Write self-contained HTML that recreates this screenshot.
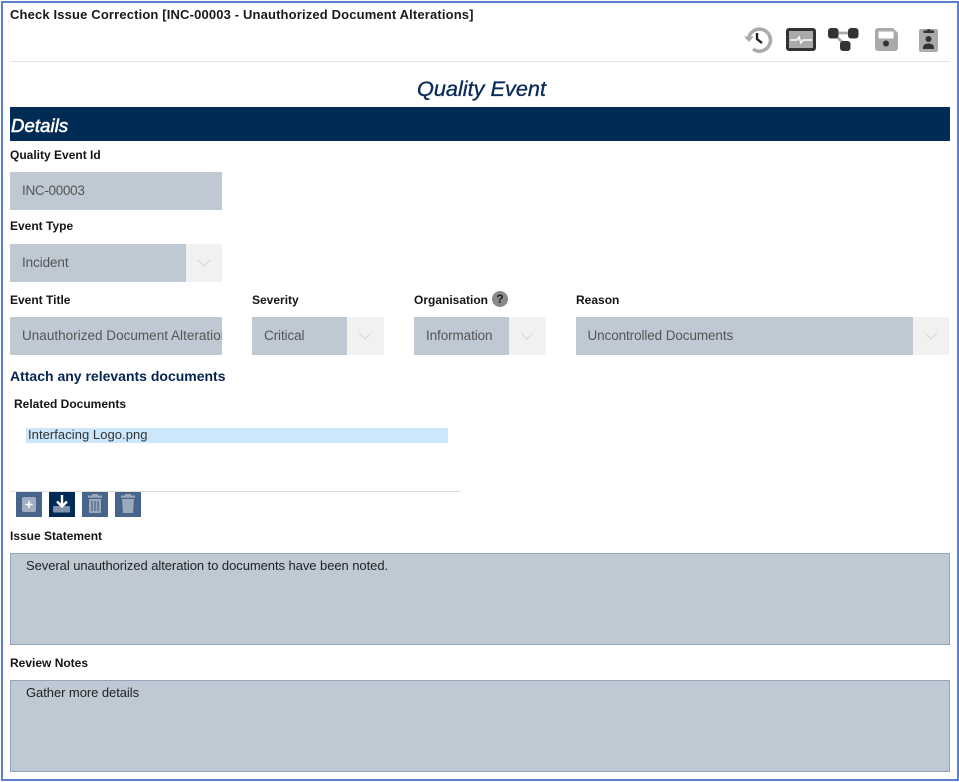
<!DOCTYPE html>
<html><head><meta charset="utf-8"><style>
html,body{margin:0;padding:0;background:#fff}
body{width:959px;height:782px;position:relative;overflow:hidden;font-family:"Liberation Sans",sans-serif;color:#111}
.a{position:absolute;white-space:nowrap}
.frame{position:absolute;left:1px;top:1px;width:954px;height:776px;border:2px solid #5b80cf}
.l{position:absolute;white-space:nowrap;font-weight:bold;font-size:12px;line-height:16px;color:#151515}
.f{position:absolute;background:#bec9d4;font-size:13.5px;color:#555;line-height:38px;padding-left:12px;box-sizing:border-box;white-space:nowrap;overflow:hidden;height:38px;letter-spacing:-.1px}
.d{position:absolute;background:#f1f1f1;height:38px;width:36px}
.d svg{position:absolute;left:11px;top:15px}
.t{position:absolute;left:10px;width:940px;background:#bec9d4;border:1px solid #93a5b8;box-sizing:border-box;font-size:13px;line-height:16px;color:#222;padding:3px 15px;letter-spacing:-.06px}
.b{position:absolute;top:492px;width:26px;height:25px;background:#47648a}
</style></head><body>
<div class="frame"></div>
<div class="a" style="left:10px;top:7px;font-size:13px;font-weight:bold;line-height:16px;color:#1a1a1a;letter-spacing:.15px">Check Issue Correction [INC-00003 - Unauthorized Document Alterations]</div>

<svg class="a" style="left:743px;top:26px" width="30" height="28" viewBox="0 0 30 28"><path d="M5.500 13.500A11 11 0 1 1 10 23" fill="none" stroke="#aaa" stroke-width="3.500"/><path d="M1 10.500l5 5.500 5-5.500z" fill="#aaa"/><path d="M14 7v6l5 4" fill="none" stroke="#222" stroke-width="2.400"/></svg>
<svg class="a" style="left:786px;top:28px" width="30" height="23" viewBox="0 0 30 23"><rect x="1.500" y="1.500" width="27" height="20" rx="1.500" fill="#aaa" stroke="#333" stroke-width="3"/><path d="M4 12h7l2-3 2 6 2-3h9" fill="none" stroke="#fff" stroke-width="1.500"/></svg>
<svg class="a" style="left:828px;top:28px" width="31" height="23" viewBox="0 0 31 23"><path d="M5 5h20M5 5l12 12" stroke="#aaa" stroke-width="2.800" fill="none"/><rect x="0" y="0" width="10.500" height="10.500" rx="3" fill="#333"/><rect x="20" y="0" width="10.500" height="10.500" rx="3" fill="#333"/><rect x="12" y="13" width="10.500" height="10" rx="3" fill="#333"/></svg>
<svg class="a" style="left:875px;top:28px" width="23" height="23" viewBox="0 0 23 23"><path d="M3 0h15l5 5v15a3 3 0 0 1-3 3H3a3 3 0 0 1-3-3V3a3 3 0 0 1 3-3z" fill="#aaa"/><rect x="3.500" y="3.500" width="15" height="7" fill="#fff"/><circle cx="11" cy="15.500" r="3" fill="#333"/></svg>
<svg class="a" style="left:919px;top:26px" width="20" height="27" viewBox="0 0 20 27"><rect x="0" y="3" width="19" height="23" rx="2" fill="#aaa"/><path d="M4.500 7V4.500h3a2.500 2.500 0 0 1 4.500 0h3V7z" fill="#333"/><circle cx="9.500" cy="13" r="3" fill="#333"/><path d="M4 23v-1.500c0-3 3-4 5.500-4s5.500 1 5.500 4V23z" fill="#333"/></svg>

<div class="a" style="left:10px;top:61px;width:940px;height:1px;background:#e3e3e3"></div>
<div class="a" style="left:417px;top:75px;font-size:21.700px;line-height:27px;font-style:italic;color:#0a2a58;-webkit-text-stroke:.35px #0a2a58">Quality Event</div>
<div class="a" style="left:10px;top:107px;width:940px;height:34px;background:#002b55"></div>
<div class="a" style="left:11px;top:113px;font-size:18.500px;line-height:25px;font-style:italic;color:#fff;-webkit-text-stroke:.6px #fff;letter-spacing:.1px">Details</div>

<div class="l" style="left:10px;top:147px">Quality Event Id</div>
<div class="f" style="left:10px;top:172px;width:212px;letter-spacing:-.3px">INC-00003</div>
<div class="l" style="left:10px;top:218px">Event Type</div>
<div class="f" style="left:10px;top:244px;width:176px">Incident</div>
<div class="d" style="left:186px;top:244px"><svg width="14" height="9"><path d="M1 1l6 6 6-6" fill="none" stroke="#d8d8d8" stroke-width="1.200"/></svg></div>

<div class="l" style="left:10px;top:292px">Event Title</div>
<div class="l" style="left:252px;top:292px">Severity</div>
<div class="l" style="left:414px;top:292px">Organisation</div>
<div class="a" style="left:492px;top:291px;width:16px;height:16px;border-radius:50%;background:#8a8a8a;color:#222;font-size:12px;font-weight:bold;line-height:16px;text-align:center">?</div>
<div class="l" style="left:576px;top:292px">Reason</div>

<div class="f" style="left:10px;top:317px;width:212px;padding-right:2px;letter-spacing:.02px">Unauthorized Document Alterations</div>
<div class="f" style="left:252px;top:317px;width:95px">Critical</div>
<div class="d" style="left:347px;top:317px;width:37px"><svg width="14" height="9"><path d="M1 1l6 6 6-6" fill="none" stroke="#d8d8d8" stroke-width="1.200"/></svg></div>
<div class="f" style="left:414px;top:317px;width:95px">Information</div>
<div class="d" style="left:509px;top:317px;width:37px"><svg width="14" height="9"><path d="M1 1l6 6 6-6" fill="none" stroke="#d8d8d8" stroke-width="1.200"/></svg></div>
<div class="f" style="left:575.500px;top:317px;width:337.500px">Uncontrolled Documents</div>
<div class="d" style="left:913px;top:317px"><svg width="14" height="9"><path d="M1 1l6 6 6-6" fill="none" stroke="#d8d8d8" stroke-width="1.200"/></svg></div>

<div class="a" style="left:10px;top:368px;font-size:14px;font-weight:bold;line-height:16px;color:#052450">Attach any relevants documents</div>
<div class="l" style="left:14px;top:396px">Related Documents</div>
<div class="a" style="left:26px;top:428px;width:422px;height:15px;background:#cce6fb"></div>
<div class="a" style="left:28px;top:427px;font-size:13px;line-height:16px;color:#333;letter-spacing:.05px">Interfacing Logo.png</div>
<div class="a" style="left:10px;top:491px;width:450px;height:1px;background:#ddd"></div>

<div class="b" style="left:16px"><svg width="26" height="25"><rect x="6" y="5" width="14" height="15" rx="2" fill="#a3afc0"/><path d="M13 9v7M9.500 12.500h7" stroke="#fff" stroke-width="1.500"/></svg></div>
<div class="b" style="left:49px;background:#002b55"><svg width="26" height="25"><rect x="4" y="14" width="17" height="6.500" rx="1" fill="#7f93ad"/><path d="M13 3v11.500M8 9.500l5 5 5-5" fill="none" stroke="#fff" stroke-width="2.400"/></svg></div>
<div class="b" style="left:82px"><svg width="26" height="25"><path d="M6 3.500h14v2.200H6zM10 2h6v2h-6zM7 7h12v13a1 1 0 0 1-1 1H8a1 1 0 0 1-1-1z" fill="#9baabb"/><path d="M10 9v10M13 9v10M16 9v10" stroke="#47648a" stroke-width="1.200"/></svg></div>
<div class="b" style="left:115px"><svg width="26" height="25"><path d="M6 3.500h14v2.200H6zM10 2h6v2h-6zM7 7h12l-1 14H8z" fill="#9baabb"/></svg></div>

<div class="l" style="left:10px;top:528px">Issue Statement</div>
<div class="t" style="top:553px;height:92px;padding-top:4px">Several unauthorized alteration to documents have been noted.</div>
<div class="l" style="left:10px;top:655px">Review Notes</div>
<div class="t" style="top:680px;height:92px;padding-top:4px">Gather more details</div>
</body></html>
